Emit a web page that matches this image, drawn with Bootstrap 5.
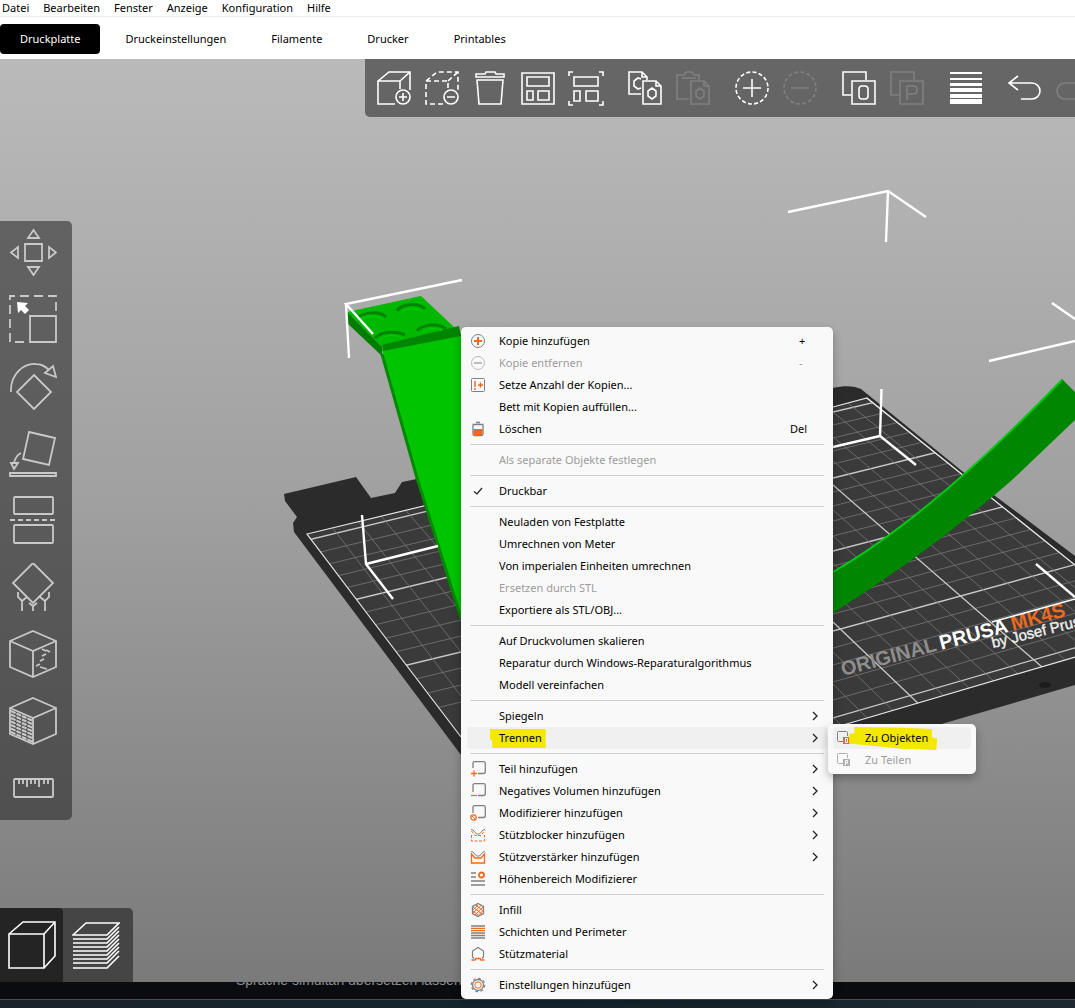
<!DOCTYPE html>
<html lang="de">
<head>
<meta charset="utf-8">
<meta name="viewport" content="width=device-width, initial-scale=1">
<title>PrusaSlicer</title>
<link href="https://cdn.jsdelivr.net/npm/bootstrap@5.3.0/dist/css/bootstrap.min.css" rel="stylesheet">
<style>
  body { font-family: "Noto Sans", "Open Sans", sans-serif; font-size: 11px; line-height: 16px; color: #000; background: #fff; overflow-x: hidden; }
  svg { display: block; fill: none; }
  .menubar { height: 17px; border-bottom: 1px solid #ececec; gap: 14px; padding-left: 2px; }
  .menubar a { color: #000; text-decoration: none; }
  .tabs { gap: 5px; padding: 7px 0 5px; }
  .tabs .nav-link { color: #000; height: 30px; padding: 0 20px; border-radius: 4px; line-height: 30px; }
  .tabs .nav-link.active { background: #000; color: #fff; }
  .stage { background: linear-gradient(#bababa, #a0a0a0 48%, #7a7a7a); }
  .scene { inset: 0; width: 100%; height: 100%; }
  .tool { border: 0; background: none; padding: 0; flex: none; display: flex; justify-content: center; align-items: center; }
  .panel { background: rgba(38, 38, 38, .57); }
  .topbar { left: 365px; right: 0; top: 0; height: 58px; padding-left: 5px; overflow: hidden; border-bottom-left-radius: 5px; }
  .topbar .tool { width: 48px; height: 58px; padding-top: 2px; stroke: #fff; stroke-width: 1.6; }
  .topbar .tool:disabled { opacity: .17; }
  .topbar .split { margin-left: 11px; }
  .sidebar { left: 0; top: 162px; width: 72px; padding: 7px 0 8px 9px; gap: 19px; border-radius: 0 5px 5px 0; }
  .sidebar .tool { width: 48px; height: 48px; stroke: #c9c9c9; stroke-width: 1.8; }
  .views { left: 0; bottom: 0; height: 74px; background: #454545; border-top-right-radius: 5px; }
  .views .tool { width: 70px; stroke: #fff; stroke-width: 1.6; padding-right: 4px; }
  .views .tool.active { width: 63px; background: #242424; padding-right: 0; border-top-right-radius: 4px; }
  .ctx { --bs-dropdown-item-padding-x: 0; display: block; min-width: 0; border: 0; border-radius: 5px; background: #f9f9f9; padding: 3px 6px; font-size: 11px; color: #000; box-shadow: 0 4px 10px rgba(0, 0, 0, .28); }
  .ctx-main { left: 461px; top: 268px; width: 372px; }
  .ctx-sub { left: 361px; top: -3px; width: 148px; padding: 3px 5px; }
  .ctx .dropdown-item { display: flex; align-items: center; height: 22px; line-height: 22px; color: #000; padding: 0 8px 0 3px; border-radius: 3px; background: none; }
  .ctx .dropdown-item:disabled { color: #9c9c9c; }
  .ctx .dropdown-item.current { background: #f0f0f0; }
  .ctx .icon { width: 16px; height: 16px; margin-right: 13px; flex: none; stroke: #808080; }
  .ctx .icon .o { stroke: #ed6b21; }
  .ctx .label { margin-right: auto; position: relative; isolation: isolate; }
  .ctx .chev { width: 8px; height: 10px; stroke: #222; stroke-width: 1.3; }
  .ctx .key { width: 29px; }
  .ctx .key.mid { width: 20px; }
  .ctx .dropdown-divider { margin: 4px 3px; border-color: #d0d0d0; opacity: 1; }
  .marker::before { content: ""; position: absolute; z-index: -1; inset: 2px -4px 1px -9px; background: #f3e800; clip-path: polygon(0 0, 100% 0, 100% 100%, 4% 100%, 4% 60%, 0 55%); }
  .marker-wide::before { inset: 0 -9px -1px -16px; clip-path: polygon(6% 0, 60% 3%, 94% 9%, 94% 45%, 100% 50%, 99% 100%, 60% 95%, 0 72%, 0 32%, 6% 26%); }
  .under { height: 17px; background: #0a0c10; overflow: hidden; color: #8b8d90; font-family: "Liberation Sans", Arial, sans-serif; font-size: 14px; padding-left: 236px; }
  .under span { display: block; margin-top: -10px; }
  .taskbar { height: 9px; background: linear-gradient(90deg, #1c2229, #14252e 45%, #1f2830); border-top: 1px solid #46505a; }
</style>
</head>
<body class="d-flex flex-column min-vh-100">

<nav class="menubar d-flex align-items-center" aria-label="Menü">
  <a href="#">Datei</a><a href="#">Bearbeiten</a><a href="#">Fenster</a><a href="#">Anzeige</a><a href="#">Konfiguration</a><a href="#">Hilfe</a>
</nav>
<nav class="tabs nav" aria-label="Ansichten">
  <a class="nav-link active" href="#">Druckplatte</a><a class="nav-link" href="#">Druckeinstellungen</a><a class="nav-link" href="#">Filamente</a><a class="nav-link" href="#">Drucker</a><a class="nav-link" href="#">Printables</a>
</nav>

<main class="stage position-relative flex-grow-1">
  <svg class="scene position-absolute" viewBox="0 59 1075 923" preserveAspectRatio="xMinYMin slice" aria-hidden="true">
    <defs>
      <clipPath id="bedR"><path d="M833 407L867 398L1075 565V657L833 728Z"/></clipPath>
      <clipPath id="bedL"><path d="M307 534L461 497V737Z"/></clipPath>
    </defs>
    <!-- left print bed -->
    <path fill="#2b2b2b" d="M284 494L356 477L371 498L395 493L402 482L461 470V755L360 620L294 532L293 523L297 517L285 501Z"/>
    <path fill="#3a3a3a" d="M307 534L461 497V737Z"/>
    <g id="gridL" clip-path="url(#bedL)"></g>
    <path stroke="#e8e8e8" stroke-width="1.2" d="M461 497L307 534L372 620L461 737"/>
    <!-- right print bed -->
    <path fill="#2b2b2b" d="M833 388C845 385 855 386 861 389L962 471L1075 556V685L890 739H833Z"/>
    <path fill="#3a3a3a" d="M833 407L867 398L1075 565V657L833 728Z"/>
    <g id="gridR" clip-path="url(#bedR)"></g>
    <path stroke="#e8e8e8" stroke-width="1.2" d="M833 407L867 398L1075 565M833 728L1075 657"/>
    <ellipse cx="1045" cy="685" rx="6" ry="3" fill="#1c1c1c"/>
    <g font-family="Liberation Sans, Arial, sans-serif" stroke="none">
      <text transform="translate(843 676) rotate(-15)" font-size="20" font-weight="700"><tspan fill="#8e8e8e">ORIGINAL</tspan><tspan fill="#fff" dx="4">PRUSA</tspan><tspan fill="#ec6a20" dx="4">MK4S</tspan></text>
      <text transform="translate(993 648) rotate(-14)" font-size="15" fill="#eee" stroke="#eee" stroke-width=".4">by Josef Prusa</text>
    </g>
    <!-- left object -->
    <path fill="#00c400" d="M382 349L461 334V620L417 478Z"/>
    <path stroke="#008a00" stroke-width="3" d="M382 354L417 478L461 618"/>
    <path fill="#00b800" d="M347 312L421 296L455 328L382 347Z"/>
    <path fill="#007d00" d="M347 312L382 347V356L347 323Z"/>
    <path fill="#008500" d="M382 345L459 326L461 336L383 351Z"/>
    <path stroke="#008300" stroke-width="3" d="M358 317C366 312 380 311 386 317M397 311C401 304 418 302 425 309M375 338C380 332 396 330 405 335M417 331C421 325 438 322 446 329"/>
    <path stroke="#00d000" d="M362 319C370 315 378 315 384 320M401 313C406 308 416 307 422 312M380 340C386 335 394 334 402 338M422 333C427 328 436 327 442 331"/>
    <!-- right object -->
    <path fill="#008600" d="M833 572Q930 516 1062 379L1075 392V420L1012 480Q930 552 833 613Z"/>
    <path stroke="#00c912" stroke-width="2" d="M833 572Q930 516 1062 380"/>
    <!-- bounding box corners -->
    <path stroke="#fff" stroke-width="2.4" d="M462 280L346 304L373 334M346 304L349 358M362 515L366 564L393 599M366 564L438 546M788 212L888 191L926 217M888 191L886 242M1052 303L1075 319M989 361L1075 341M881.500 389L880 436L916 465M833 447L880 436M1036 564L1075 597"/>
    <path stroke="#fff" stroke-width="1.5" d="M992 622L1075 599"/>
  </svg>

  <div class="topbar panel position-absolute d-flex" role="toolbar" aria-label="Werkzeuge">
    <button class="tool" aria-label="Hinzufügen"><svg width="36" height="36"><path d="M19 33H2V10H24V18M2 10L13 1H34V19M24 10L34 1"/><circle cx="27" cy="26" r="7"/><path d="M23 26h8M27 22v8"/></svg></button>
    <button class="tool" aria-label="Löschen"><svg width="36" height="36"><path stroke-dasharray="5 3" d="M19 33H2V10H24V18M2 10L13 1H34V19M24 10L34 1"/><circle cx="27" cy="26" r="7"/><path d="M23 26h8"/></svg></button>
    <button class="tool" aria-label="Alles löschen"><svg width="36" height="36"><path d="M4 6V3H13L14 1H23L24 3H32V6ZM5 9H31L29 33H7Z"/></svg></button>
    <button class="tool" aria-label="Anordnen"><svg width="36" height="36"><path d="M2 2H34V33H2ZM7 6H29V15H7ZM7 20H13V29H7ZM18 20H29V29H18Z"/></svg></button>
    <button class="tool" aria-label="Auswahl anordnen"><svg width="36" height="36"><path d="M1 5V1H5M31 1H35V5M1 30V34H5M31 34H35V30M6 6H30V15H6ZM6 20H12V30H6ZM18 20H30V30H18Z"/></svg></button>
    <button class="tool split" aria-label="Kopieren"><svg width="36" height="36"><path d="M14 23H2V1H15L20 6V9M15 1V6H20M16 10H29L34 15V33H16ZM29 10V15H34M21 20L25 17L29 20V25L25 28L21 25ZM14 8L11 7L7 10V15L11 18L14 17"/></svg></button>
    <button class="tool" disabled aria-label="Einfügen"><svg width="36" height="36"><path d="M14 28H2V4H9L11 1H17L19 4H24V9M7 7H21M16 10H29L34 15V33H16ZM29 10V15H34M21 20L25 17L29 20V25L25 28L21 25Z"/></svg></button>
    <button class="tool split" aria-label="Instanz hinzufügen"><svg width="36" height="36"><circle cx="18" cy="17" r="16" stroke-dasharray="4 2.283"/><path d="M9 17H27M18 8V26"/></svg></button>
    <button class="tool" disabled aria-label="Instanz entfernen"><svg width="36" height="36"><circle cx="18" cy="17" r="16" stroke-dasharray="4 2.283"/><path d="M9 17H27"/></svg></button>
    <button class="tool split" aria-label="In Objekte trennen"><svg width="36" height="36"><path d="M10 24H2V1H25V9M11 10H34V33H11Z"/><rect x="18" y="15" width="9" height="13" rx="3"/></svg></button>
    <button class="tool" disabled aria-label="In Teile trennen"><svg width="36" height="36"><path d="M10 24H2V1H25V9M11 10H34V33H11ZM18 29V15H24Q28 15 28 19T24 23H18"/></svg></button>
    <button class="tool split" aria-label="Variable Schichthöhe"><svg width="36" height="36"><path fill="#fff" stroke="none" d="M2 1H34V3H2ZM2 7H34V9H2ZM2 12H34V15H2ZM2 17H34V21H2ZM2 23H34V27H2ZM2 28H34V33H2Z"/></svg></button>
    <button class="tool split" aria-label="Rückgängig"><svg width="36" height="36"><path d="M11 5L2 12L11 19M2 12H25A8 8 0 0 1 25 28H14"/></svg></button>
    <button class="tool" disabled aria-label="Wiederholen"><svg width="36" height="36"><path d="M25 5L34 12L25 19M34 12H10A8 8 0 0 0 10 28H22"/></svg></button>
  </div>

  <div class="sidebar panel position-absolute d-flex flex-column" role="toolbar" aria-label="Bearbeiten">
    <button class="tool" aria-label="Bewegen"><svg width="48" height="48"><path d="M16 16H33V33H16ZM24.500 2L30 10H19ZM24.500 47L30 39H19ZM2 24.500L9 19V30ZM47 24.500L40 19V30Z"/></svg></button>
    <button class="tool" aria-label="Skalieren"><svg width="48" height="48"><path d="M21 21H47V47H21Z"/><path stroke-dasharray="9 5" d="M47 16V1H1V47H17"/><path fill="#fff" stroke="none" d="M8 7L19 8L16 11L20 15L16 19L12 15L9 18Z"/></svg></button>
    <button class="tool" aria-label="Drehen"><svg width="48" height="48"><path d="M25 13L42 30L25 47L8 30ZM2 30C1 12 15 1 27 2C32 2 36 4 40 8M36 11L44 4L47 15Z"/></svg></button>
    <button class="tool" aria-label="Auf Fläche legen"><svg width="48" height="48"><path d="M20 3L46 9L40 36L14 30ZM1 44H47V47H1ZM12 24C8 26 6 29 5 34M2 34H9L5 40Z"/></svg></button>
    <button class="tool" aria-label="Schneiden"><svg width="48" height="48"><rect x="5" y="1" width="39" height="17" rx="1"/><rect x="5" y="29" width="39" height="18" rx="1"/><path stroke-dasharray="5 3" d="M1 24H47"/></svg></button>
    <button class="tool" aria-label="Stützen aufmalen"><svg width="48" height="48"><path d="M24 0L44 20L24 40L4 20ZM9 29V34L13 38L18 34M13 38V49M40 29V34L36 38L31 34M36 38V49M20 40L24 43L28 40M24 43V49"/></svg></button>
    <button class="tool" aria-label="Naht aufmalen"><svg width="48" height="48"><path d="M24 1L47 11V37L24 47L1 37V11ZM1 11L24 21L47 11M24 21V47M33 19L37 21M37 20L41 22M33 26L37 24M31 31L35 29M27 36L31 34M31 37L38 39"/></svg></button>
    <button class="tool" aria-label="Multimaterial"><svg width="48" height="48"><path d="M24 1L47 11V37L24 47L1 37V11ZM1 11L24 21L47 11M24 21V47"/><path stroke-width="2" stroke-dasharray="5 1" d="M2 14L24 24M2 17.500L24 27.500M2 21L24 31M2 24.500L24 34.500M2 28L24 38M2 31.500L24 41.500M2 35L24 45"/></svg></button>
    <button class="tool" aria-label="Messen"><svg width="48" height="48"><rect x="5" y="15" width="39" height="18" rx="1"/><path d="M10 16V20M14 16V20M18 16V23M22 16V20M26 16V20M30 16V23M35 16V20M39 16V20"/></svg></button>
  </div>

  <div class="views position-absolute d-flex">
    <button class="tool active" aria-label="3D-Ansicht"><svg width="48" height="48"><path d="M1 13H36V47H1ZM1 13L15 1H47V35L36 47M36 13L47 1"/></svg></button>
    <button class="tool" aria-label="Vorschau"><svg width="48" height="48"><path d="M1 14L14 2H47L35 14ZM1 18H35L47 6M1 22H35L47 10M1 26H35L47 14M1 30H35L47 18M1 34H35L47 22M1 38H35L47 26M1 42H35L47 30M1 47H35L47 35"/></svg></button>
  </div>

  <ul class="ctx ctx-main dropdown-menu show position-absolute">
    <li><button class="dropdown-item"><svg class="icon" viewBox="0 0 16 16"><circle cx="8" cy="8" r="6.500"/><path class="o" stroke-width="2" d="M4 8H12M8 4V12"/></svg><span class="label">Kopie hinzufügen</span><span class="key mid">+</span></button></li>
    <li><button class="dropdown-item" disabled><svg class="icon" viewBox="0 0 16 16" opacity=".5"><circle cx="8" cy="8" r="6.500"/><path stroke-width="2" d="M4 8H12"/></svg><span class="label">Kopie entfernen</span><span class="key mid">-</span></button></li>
    <li><button class="dropdown-item"><svg class="icon" viewBox="0 0 16 16"><rect x="1.500" y="1.500" width="13" height="13" rx="1"/><path class="o" stroke-width="1.500" d="M5 4V10M5 11V13M8 8H13M10.500 5.500V10.500"/></svg><span class="label">Setze Anzahl der Kopien...</span></button></li>
    <li><button class="dropdown-item"><span class="icon"></span><span class="label">Bett mit Kopien auffüllen...</span></button></li>
    <li><button class="dropdown-item"><svg class="icon" viewBox="0 0 16 16"><path stroke-width="1.300" d="M2.500 3.500H13.500M6 1.500H10M3 4V12.500Q3 14.500 5 14.500H11Q13 14.500 13 12.500V4"/><path fill="#ed6b21" stroke="none" d="M3.500 8H12.500V12.500Q12.500 14 11 14H5Q3.500 14 3.500 12.500Z"/></svg><span class="label">Löschen</span><span class="key">Del</span></button></li>
    <li><hr class="dropdown-divider"></li>
    <li><button class="dropdown-item" disabled><span class="icon"></span><span class="label">Als separate Objekte festlegen</span></button></li>
    <li><hr class="dropdown-divider"></li>
    <li><button class="dropdown-item"><svg class="icon" viewBox="0 0 16 16"><path stroke="#222" stroke-width="1.200" d="M4 8.500L7 11L12 5"/></svg><span class="label">Druckbar</span></button></li>
    <li><hr class="dropdown-divider"></li>
    <li><button class="dropdown-item"><span class="icon"></span><span class="label">Neuladen von Festplatte</span></button></li>
    <li><button class="dropdown-item"><span class="icon"></span><span class="label">Umrechnen von Meter</span></button></li>
    <li><button class="dropdown-item"><span class="icon"></span><span class="label">Von imperialen Einheiten umrechnen</span></button></li>
    <li><button class="dropdown-item" disabled><span class="icon"></span><span class="label">Ersetzen durch STL</span></button></li>
    <li><button class="dropdown-item"><span class="icon"></span><span class="label">Exportiere als STL/OBJ...</span></button></li>
    <li><hr class="dropdown-divider"></li>
    <li><button class="dropdown-item"><span class="icon"></span><span class="label">Auf Druckvolumen skalieren</span></button></li>
    <li><button class="dropdown-item"><span class="icon"></span><span class="label">Reparatur durch Windows-Reparaturalgorithmus</span></button></li>
    <li><button class="dropdown-item"><span class="icon"></span><span class="label">Modell vereinfachen</span></button></li>
    <li><hr class="dropdown-divider"></li>
    <li><button class="dropdown-item"><span class="icon"></span><span class="label">Spiegeln</span><svg class="chev" viewBox="0 0 8 10"><path d="M2 1L6 5L2 9"/></svg></button></li>
    <li class="position-relative"><button class="dropdown-item current"><span class="icon"></span><span class="label marker">Trennen</span><svg class="chev" viewBox="0 0 8 10"><path d="M2 1L6 5L2 9"/></svg></button>
      <ul class="ctx ctx-sub dropdown-menu show position-absolute">
        <li><button class="dropdown-item current"><svg class="icon" viewBox="0 0 16 16"><path d="M7 11.500H2.500Q1.500 11.500 1.500 10.500V2.500Q1.500 1.500 2.500 1.500H10.500Q11.500 1.500 11.500 2.500V6"/><path fill="#ed6b21" stroke="none" d="M7 7H14V14H7Z"/><path stroke="#fff" d="M9.500 8.500H11.500V12.500H9.500Z"/></svg><span class="label marker marker-wide">Zu Objekten</span></button></li>
        <li><button class="dropdown-item" disabled><svg class="icon" viewBox="0 0 16 16" opacity=".6"><path d="M7 11.500H2.500Q1.500 11.500 1.500 10.500V2.500Q1.500 1.500 2.500 1.500H10.500Q11.500 1.500 11.500 2.500V6"/><path fill="#808080" stroke="none" d="M7 7H14V14H7Z"/><path stroke="#fff" d="M9.500 13V8.500H11.500V11H9.500"/></svg><span class="label">Zu Teilen</span></button></li>
      </ul>
    </li>
    <li><hr class="dropdown-divider"></li>
    <li><button class="dropdown-item"><svg class="icon" viewBox="0 0 16 16"><path stroke-width="1.300" d="M3 7V2.500Q3 .7 4.500 .7H13.500Q15.300 .7 15.300 2.500V10.500Q15.300 12.500 13.500 12.500H8"/><path class="o" stroke-width="1.300" d="M1 12.500H7M4 9.500V15.500"/></svg><span class="label">Teil hinzufügen</span><svg class="chev" viewBox="0 0 8 10"><path d="M2 1L6 5L2 9"/></svg></button></li>
    <li><button class="dropdown-item"><svg class="icon" viewBox="0 0 16 16"><path stroke-width="1.300" d="M3 9V2.500Q3 .7 4.500 .7H13.500Q15.300 .7 15.300 2.500V10.500Q15.300 12.500 13.500 12.500H8"/><path class="o" stroke-width="1.300" d="M1 12.500H7"/></svg><span class="label">Negatives Volumen hinzufügen</span><svg class="chev" viewBox="0 0 8 10"><path d="M2 1L6 5L2 9"/></svg></button></li>
    <li><button class="dropdown-item"><svg class="icon" viewBox="0 0 16 16"><path stroke-width="1.300" d="M3 8V2.500Q3 .7 4.500 .7H13.500Q15.300 .7 15.300 2.500V10.500Q15.300 12.500 13.500 12.500H8"/><circle class="o" cx="3.500" cy="12.500" r="2.700" stroke-width="1.300"/><path class="o" d="M2 11L5 14"/></svg><span class="label">Modifizierer hinzufügen</span><svg class="chev" viewBox="0 0 8 10"><path d="M2 1L6 5L2 9"/></svg></button></li>
    <li><button class="dropdown-item"><svg class="icon" viewBox="0 0 16 16"><path d="M1 2.500L3 3L6.500 7H9.500L13 3L15 2.500"/><path class="o" stroke-dasharray="3 1.500" d="M1.500 4L5 8.500H11L14.500 4M1.500 8V14H14.500V8"/></svg><span class="label">Stützblocker hinzufügen</span><svg class="chev" viewBox="0 0 8 10"><path d="M2 1L6 5L2 9"/></svg></button></li>
    <li><button class="dropdown-item"><svg class="icon" viewBox="0 0 16 16"><path d="M1 2.500L3 3L6.500 7H9.500L13 3L15 2.500"/><path class="o" stroke-width="1.300" d="M1.500 5V14H14.500V5L11 9H5Z"/></svg><span class="label">Stützverstärker hinzufügen</span><svg class="chev" viewBox="0 0 8 10"><path d="M2 1L6 5L2 9"/></svg></button></li>
    <li><button class="dropdown-item"><svg class="icon" viewBox="0 0 16 16"><path stroke-width="1.500" d="M1 2H6M1 6H6M1 10H15M1 14H15"/><circle class="o" cx="11.500" cy="4" r="2.500" stroke-width="1.800"/></svg><span class="label">Höhenbereich Modifizierer</span></button></li>
    <li><hr class="dropdown-divider"></li>
    <li><button class="dropdown-item"><svg class="icon" viewBox="0 0 16 16"><path stroke-width="1.300" d="M8 1.500L13.500 4.500V11.500L8 14.500L2.500 11.500V4.500Z"/><path class="o" d="M3 8L8 3M3 11L11 3.500M5 13L13 5M8 13.500L13 8.500M3 5L12 12M6 3L13 9M3 9L8 13"/></svg><span class="label">Infill</span></button></li>
    <li><button class="dropdown-item"><svg class="icon" viewBox="0 0 16 16"><path stroke-width="1.500" d="M1 2H15M1 9H15M1 11.500H15M1 14H15"/><path class="o" stroke-width="1.300" d="M1 4.300H15M1 6.600H15"/></svg><span class="label">Schichten und Perimeter</span></button></li>
    <li><button class="dropdown-item"><svg class="icon" viewBox="0 0 16 16"><path stroke-width="1.200" d="M4 12.500L2.500 11V5L8 1.500L13.500 5V11L12 12.500"/><path class="o" stroke-width="1.500" d="M1.500 14H5L6 12.500H10L11 14H14.500"/></svg><span class="label">Stützmaterial</span></button></li>
    <li><hr class="dropdown-divider"></li>
    <li><button class="dropdown-item"><svg class="icon" viewBox="0 0 16 16"><circle cx="8" cy="8" r="5.500" stroke-width="1.300"/><circle cx="8" cy="8" r="6.700" stroke-width="1.200" stroke-dasharray="2.600 2.660"/><circle class="o" cx="8" cy="8" r="3.200"/></svg><span class="label">Einstellungen hinzufügen</span><svg class="chev" viewBox="0 0 8 10"><path d="M2 1L6 5L2 9"/></svg></button></li>
  </ul>
</main>
<footer>
  <div class="under"><span>Sprache simultan übersetzen lassen</span></div>
  <div class="taskbar"></div>
</footer>

<script src="https://cdn.jsdelivr.net/npm/bootstrap@5.3.0/dist/js/bootstrap.bundle.min.js"></script>
<script>
  // Draws the bed grid: every line is given by its height at x0 and its slope.
  function grid(id, x0, x1, x2, lines) {
    document.getElementById(id).innerHTML = lines.map(function (l) {
      return '<path d="M' + x1 + ' ' + (l[0] + (x1 - x0) * l[1]) + 'L' + x2 + ' ' + (l[0] + (x2 - x0) * l[1]) +
        '" stroke="' + (l[2] ? '#c8c8c8' : '#777') + '" stroke-width="' + (l[2] ? 1.3 : 0.8) + '"/>';
    }).join('');
  }
  var rows = [412, 425, 438, 451, 464, 478, 492, 506, 521, 536, 551, 566, 582, 598, 614, 631, 648, 665, 682, 700, 718];
  var cols = [371, 391, 412, 437, 461, 485, 510, 536, 563, 592, 622, 652, 684, 717];
  grid('gridR', 833, 833, 1075,
    rows.map(function (y, i) { return [y, -0.235 - (y - 412) * 0.00018, i % 5 === 0]; })
      .concat(cols.map(function (y, i) { return [y, 0.8 + (y - 371) * 0.00062, i % 5 === 0]; })));
  grid('gridL', 461, 300, 461,
    [503, 518, 532, 546, 560, 574, 589, 604, 620, 636, 652, 668, 685, 702].map(function (y, i) { return [y, -0.242, i % 5 === 0]; })
      .concat([[696, 1.31], [652, 1.27], [612, 1.2], [574, 1.15]]));
</script>
</body>
</html>
